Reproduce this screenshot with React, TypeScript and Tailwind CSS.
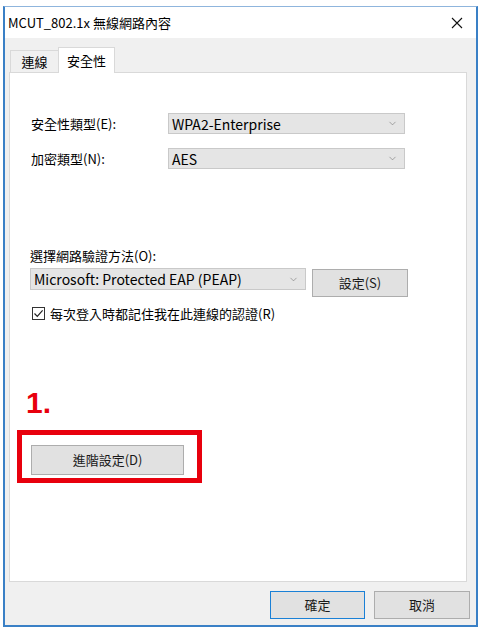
import { ChevronDown } from 'lucide-react'

const font = { fontFamily: '"Noto Sans CJK TC", "Noto Sans", sans-serif' }

function Combo({ value, width }: { value: string; width: string }) {
  return (
    <div
      className={`${width} h-[21px] flex items-center justify-between bg-[#e5e5e5] border border-[#c9c9c9] pl-[3px] pr-[6px]`}
    >
      <span className="text-[14px] leading-none text-black">{value}</span>
      <ChevronDown size={11} strokeWidth={1.2} className="text-[#6b6b6b]" />
    </div>
  )
}

function Button({ label, className = '', primary = false }: { label: string; className?: string; primary?: boolean }) {
  return (
    <button
      className={`flex items-center justify-center bg-[#e1e1e1] border text-[13px] text-[#1a1a1a] ${
        primary ? 'border-[#1a80d6]' : 'border-[#adadad]'
      } ${className}`}
    >
      {label}
    </button>
  )
}

export default function App() {
  return (
    <div className="w-[483px] h-[633px] bg-white pt-[6px] pl-[3px]" style={font}>
      <div className="w-[475px] h-[621px] flex flex-col border-2 border-t border-[#3a80c6] border-t-[#8fb5dd]">
        {/* title bar */}
        <div className="h-[31px] bg-white flex items-center justify-between pl-[3px] pr-[12px]">
          <span className="text-[13px] text-black">MCUT_802.1x 無線網路內容</span>
          <svg width="12" height="12" viewBox="0 0 12 12" className="mr-[1px]">
            <path d="M1 1 L11 11 M11 1 L1 11" stroke="#111" strokeWidth="1.1" fill="none" />
          </svg>
        </div>

        <div className="flex-1 bg-[#f0f0f0] flex flex-col">
          {/* tabs */}
          <div className="flex items-end h-[34px] pl-[5px] pt-[8px]">
            <div className="w-[49px] h-[23px] -mr-px flex items-center justify-center border border-b-0 border-[#d9d9d9] text-[13px] text-black -mb-px">
              連線
            </div>
            <div className="w-[57px] h-[26px] flex items-center justify-center bg-white border border-b-0 border-[#d9d9d9] text-[13px] text-black -mb-px relative z-10">
              安全性
            </div>
          </div>

          {/* panel */}
          <div className="ml-[4px] w-[458px] h-[510px] bg-white border border-[#d9d9d9] flex flex-col text-[13px] text-black">
            <div className="mt-[40px] flex items-center h-[21px]">
              <span className="ml-[21px] w-[137px]">安全性類型(E):</span>
              <Combo value="WPA2-Enterprise" width="w-[237px]" />
            </div>
            <div className="mt-[14px] flex items-center h-[21px]">
              <span className="ml-[21px] w-[137px]">加密類型(N):</span>
              <Combo value="AES" width="w-[237px]" />
            </div>

            <div className="mt-[78px] ml-[20px] h-[18px] leading-[18px]">選擇網路驗證方法(O):</div>
            <div className="mt-[3px] ml-[20px] flex items-start">
              <div className="h-[22px]">
                <Combo value="Microsoft: Protected EAP (PEAP)" width="w-[276px] !h-[22px]" />
              </div>
              <Button label="設定(S)" className="ml-[6px] mt-[1px] w-[96px] h-[28px]" />
            </div>
            <div className="mt-[8px] ml-[22px] flex items-center h-[17px]">
              <div className="w-[13px] h-[13px] border border-[#333] bg-white flex items-center justify-center">
                <svg width="11" height="11" viewBox="0 0 11 11">
                  <path d="M1.5 5.5 L4.3 8.3 L9.6 2.4" stroke="#222" strokeWidth="1.2" fill="none" />
                </svg>
              </div>
              <span className="ml-[5px]">每次登入時都記住我在此連線的認證(R)</span>
            </div>

            <div
              className="mt-[64px] ml-[16px] h-[34px] leading-[34px] text-[30px] font-bold text-[#e8000d]"
              style={{ fontFamily: '"Liberation Sans", Arial, sans-serif' }}
            >
              1.
            </div>
            <div className="mt-[10px] ml-[7px] w-[185px] h-[53px] border-[5px] border-[#e8000d] pl-[9px] pt-[10px]">
              <Button label="進階設定(D)" className="w-[153px] h-[30px]" />
            </div>
          </div>

          {/* footer */}
          <div className="flex justify-end pt-[9px] pr-[6px] gap-[9px]">
            <Button label="確定" primary className="w-[95px] h-[28px]" />
            <Button label="取消" className="w-[96px] h-[28px]" />
          </div>
        </div>
      </div>
    </div>
  )
}
